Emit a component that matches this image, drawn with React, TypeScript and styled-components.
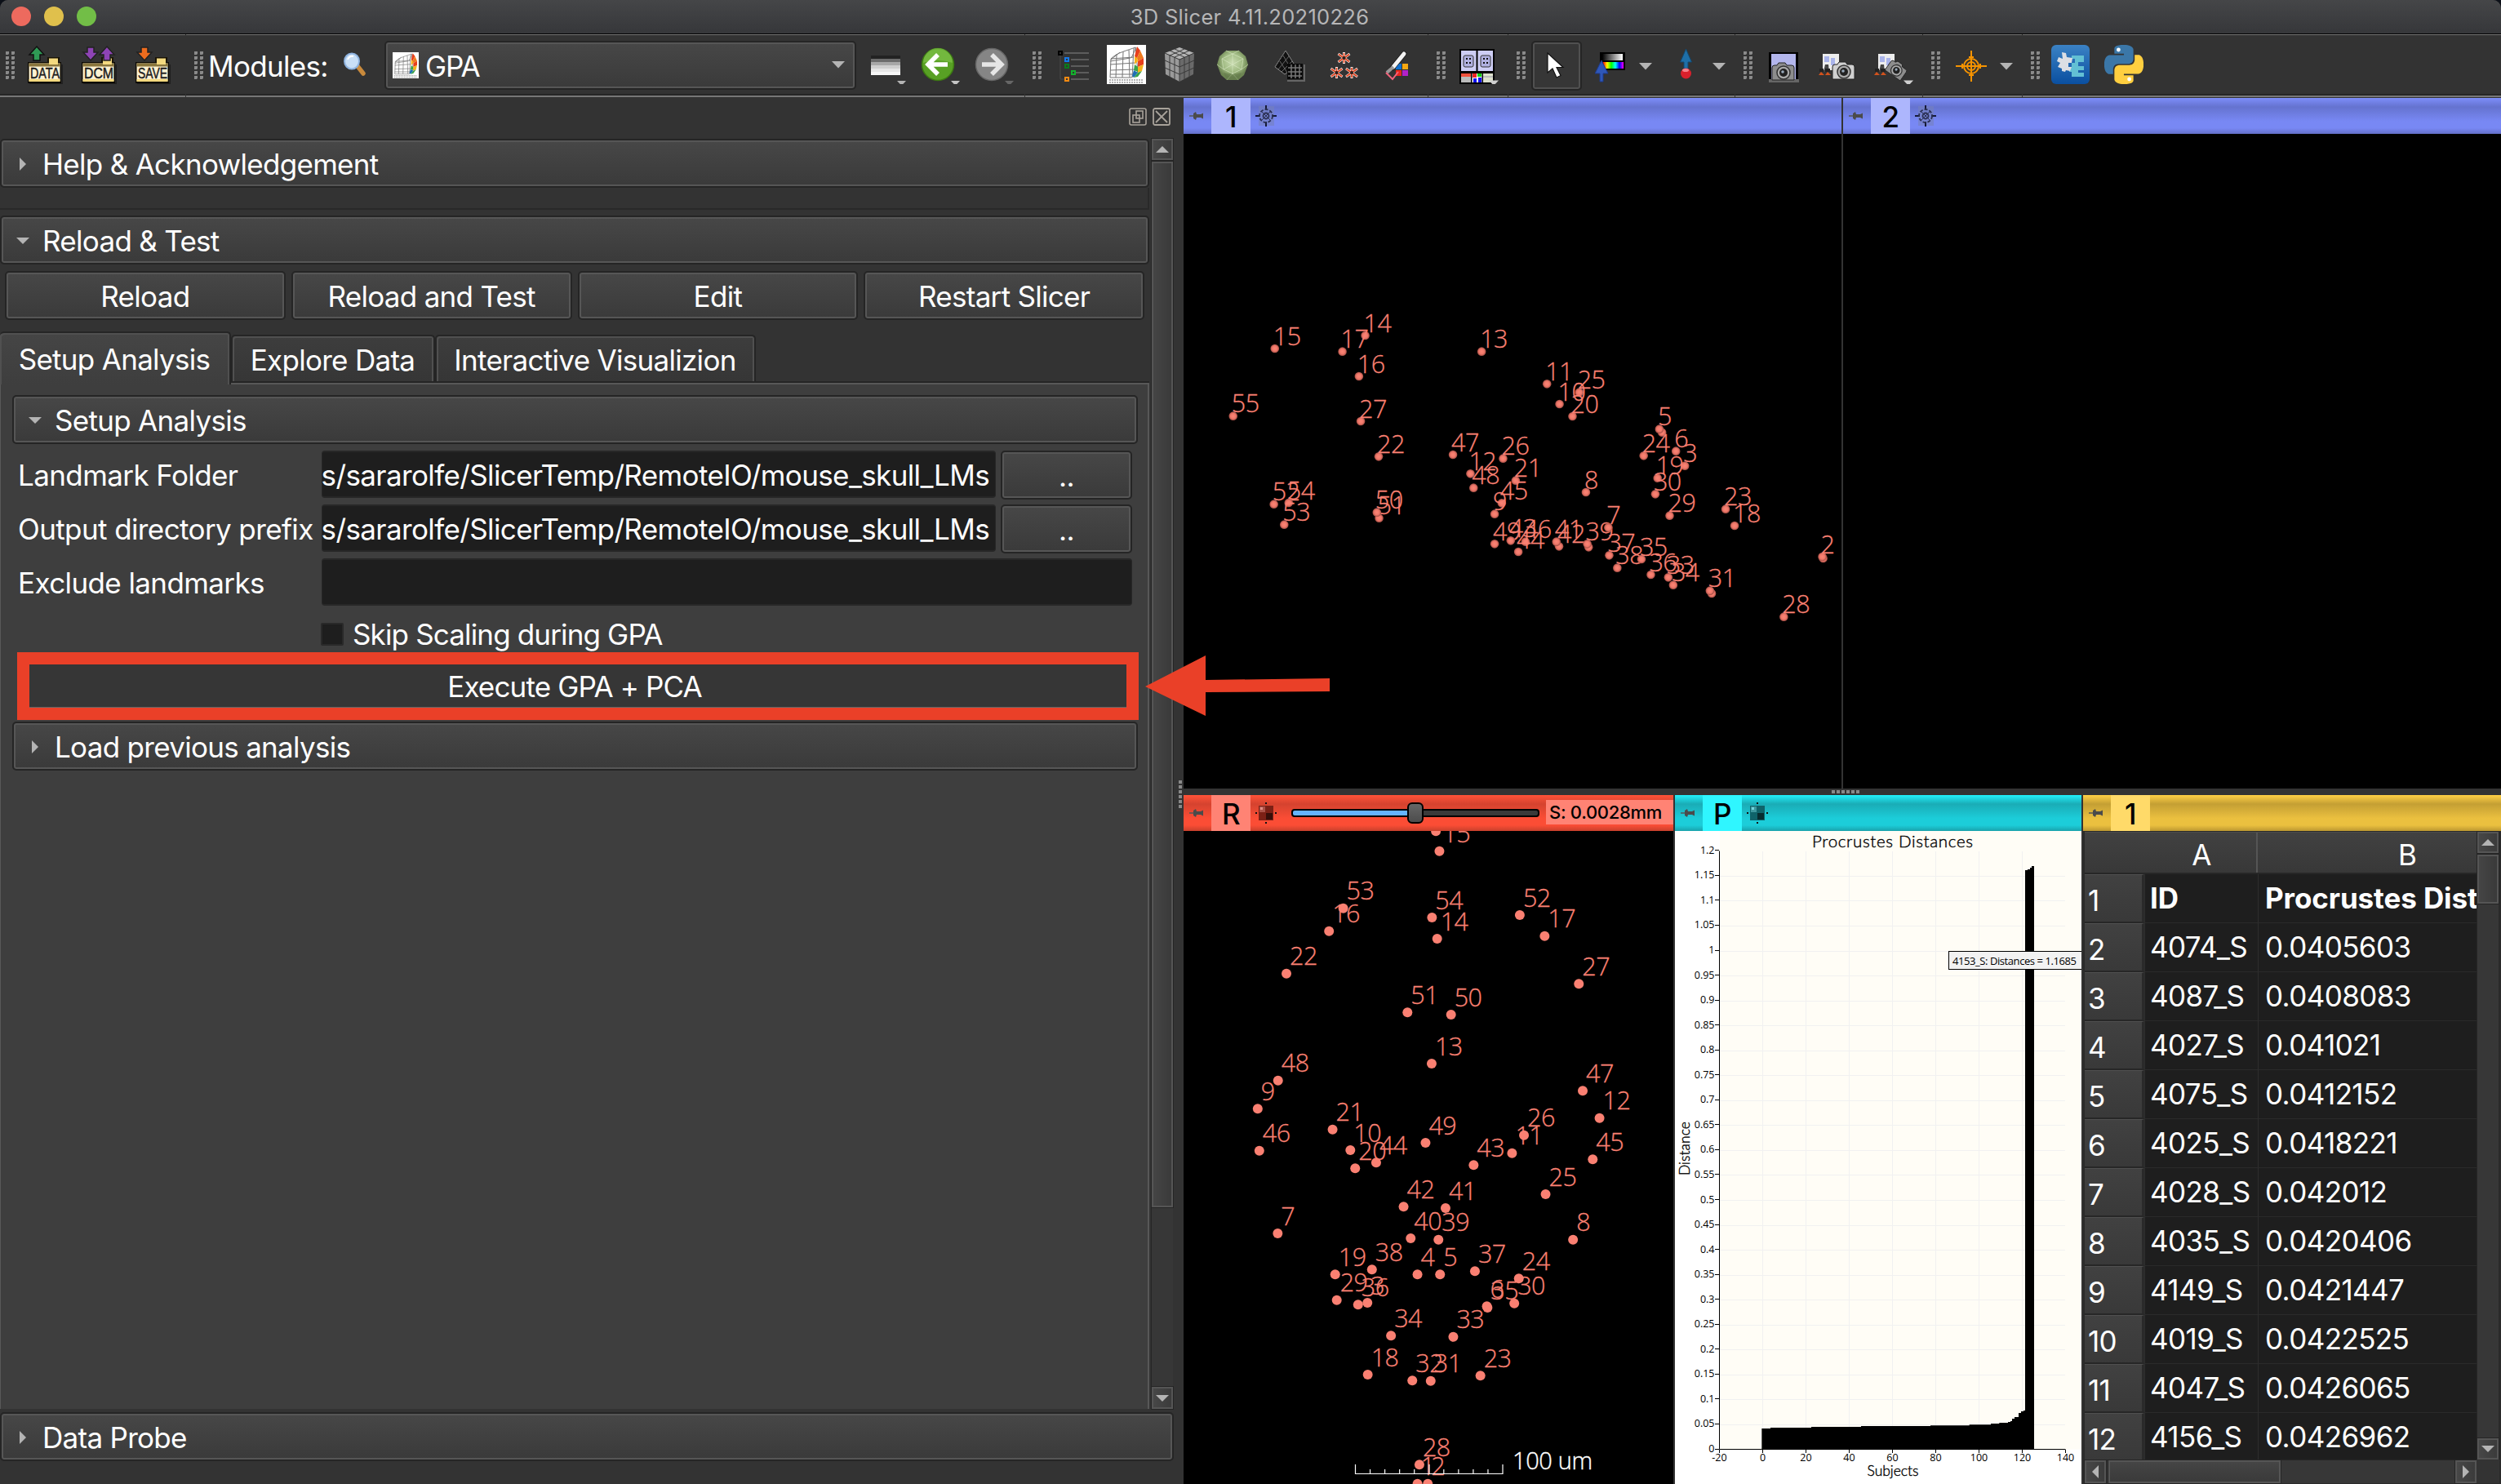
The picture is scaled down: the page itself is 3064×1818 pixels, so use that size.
import React from "react";
import styled, { createGlobalStyle, css } from "styled-components";

const Global = createGlobalStyle`
  * { box-sizing: border-box; }
  html, body { margin: 0; padding: 0; background: #0c1018; }
  body { font-family: Inter, "Liberation Sans", sans-serif; color: #fff; }
  svg { display: block; flex: none; }
`;

/* ---------- shared surfaces ---------- */

const bevel = css`
  background: linear-gradient(#474747, #3a3a3a);
  border: 2px solid #252525;
  border-radius: 5px;
  box-shadow: inset 0 0 0 2px #565656;
`;

const Window = styled.div`
  width: 3064px;
  height: 1818px;
  display: flex;
  flex-direction: column;
  overflow: hidden;
  background: #333;
  border-radius: 10px 10px 0 0;
  font-size: 35px;
  letter-spacing: -0.7px;
  line-height: 1;
  white-space: nowrap;
`;

const TitleBar = styled.div`
  position: relative;
  height: 42px;
  flex: none;
  display: flex;
  align-items: center;
  justify-content: center;
  background: linear-gradient(#454648, #36373a);
  border-bottom: 1px solid #000;
  color: #b6b6b7;
  font-size: 25.5px;
  letter-spacing: 0.3px;
  padding-right: 2px;
`;

const Lights = styled.div`
  position: absolute;
  left: 14px;
  top: 8px;
  display: flex;
  gap: 16px;
`;

const Light = styled.i<{ c: string }>`
  width: 24px;
  height: 24px;
  border-radius: 50%;
  background: ${(p) => p.c};
`;

/* ---------- toolbar ---------- */

const Toolbar = styled.div`
  height: 78px;
  flex: none;
  display: flex;
  gap: 1px;
`;

const Group = styled.div<{ w?: number }>`
  ${(p) => (p.w ? `width:${p.w - 1}px; flex:none;` : "flex:1;")}
  display: flex;
  align-items: center;
  border-top: 1px solid #777;
  border-bottom: 2px solid #777;
  box-shadow: inset 0 -2px 0 #262626;
  background: #333;
  padding-bottom: 2px;
  margin-bottom: 1px;
`;

const Handle = styled.i<{ ml: number }>`
  width: 12px;
  height: 34px;
  flex: none;
  margin: 2px 0 0 ${(p) => p.ml}px;
  background-image: linear-gradient(135deg, #8a8a8a 50%, #555 50%);
  background-size: 7px 6px;
  mask: repeating-linear-gradient(#000 0 4px, transparent 4px 6px), repeating-linear-gradient(90deg, #000 0 4px, transparent 4px 7px);
  mask-composite: intersect;
`;

const Tool = styled.span<{ ml: number }>`
  margin-left: ${(p) => p.ml}px;
  flex: none;
`;

const ModulesLabel = styled.span`
  width: 144px;
  margin: 5px 0 0 5px;
  flex: none;
`;

const Combo = styled.div`
  ${bevel}
  width: 578px;
  height: 60px;
  margin: 1px 0 0 23px;
  flex: none;
  display: flex;
  align-items: center;
  padding: 0 12px 0 8px;
  gap: 8px;
`;

const ComboText = styled.span`
  flex: 1;
  padding-top: 3px;
  letter-spacing: -1.2px;
`;

const Pressed = styled.span`
  width: 62px;
  height: 61px;
  flex: none;
  margin: 2px 0 0 6px;
  display: flex;
  align-items: center;
  justify-content: center;
  padding-left: 2px;
  border: 2px solid #252525;
  border-radius: 5px;
  box-shadow: inset 0 0 0 2px #505050;
  background: #363636;
`;

const Icon = ({ w, children, ml = 0 }: { w: number; ml?: number; children: React.ReactNode }) => (
  <Tool ml={ml}>
    <svg width={w} height={48} viewBox={`0 0 ${w} 48`}>
      {children}
    </svg>
  </Tool>
);

const Drop = ({ ml }: { ml: number }) => (
  <Icon w={16} ml={ml}>
    <path d="M0 22h16l-8 8.500z" fill="#b4b4b4" />
  </Icon>
);

const Folder = ({ label, ml, children }: { label: string; ml: number; children: React.ReactNode }) => (
  <Icon w={43} ml={ml}>
    <path d="M2 48h41V24" stroke="#1f1f1f" strokeWidth="3" fill="none" />
    <rect x="24" y="15" width="15" height="8" fill="#1a1508" />
    <rect x="26" y="16.500" width="11" height="7" fill="#f3d97f" />
    <rect x="0" y="21" width="41" height="26" fill="#0d0a04" />
    <rect x="1.500" y="22.500" width="38" height="22" fill="#fdf2d2" />
    <rect x="1.500" y="22.500" width="38" height="4" fill="#8a763c" />
    <rect x="26" y="18" width="11" height="6" fill="#f3d97f" />
    <rect x="1.500" y="42" width="38" height="3" fill="#f3d97f" />
    <text x="3" y="40.500" fontFamily="Liberation Sans, sans-serif" fontSize="18.500" letterSpacing="0" textLength="36" lengthAdjust="spacingAndGlyphs" fill="#1b1b1b" stroke="#1b1b1b" strokeWidth=".5">
      {label}
    </text>
    {children}
  </Icon>
);

const upArrow = "M11 2l9 10h-5v7h-8v-7h-5z";
const downArrow = "M11 19l9-10h-5v-6h-8v6h-5z";

const MeshFace = ({ s }: { s: number }) => (
  <g transform={`scale(${s})`}>
    <rect width="48" height="48" fill="#fff" />
    <path d="M5 17c8-8 20-10 30-14l3 30-8 7H4z M5 17l28-2M4 24l30-2M4 31l31-1M4 36h30M12 11l-1 29M20 8l-1 32M27 6l1 34M33 4l-2 36M16 9l-11 9M36 3l-6 13M4 20l25-4" fill="none" stroke="#777" strokeWidth="1" />
    <path d="M37 2l4 5-4 9-3-2z" fill="#e8401c" />
    <path d="M41 7l4 9-7 4-1-4z" fill="#f07a1e" />
    <path d="M37 16l-3-2v10l4-4z" fill="#f6b21b" />
    <path d="M45 16v8l-7 3v-7z" fill="#e8401c" />
    <path d="M34 24l4 3v6l-5-2z" fill="#37a34a" />
    <path d="M45 24l-2 8-5 2v-7z" fill="#f6b21b" />
    <path d="M33 31l5 3-5 6-2-2z" fill="#1f6fb5" />
    <path d="M43 32l-5 7-5 1 5-6z" fill="#37a34a" />
    <path d="M3 43h42M3 46h42" stroke="#999" strokeWidth="1.500" strokeDasharray="2 1" />
  </g>
);

const Star = ({ x, y }: { x: number; y: number }) => (
  <g transform={`translate(${x} ${y})`}>
    <path d="M0-7V7M-7-5L7 5M-7 5L7-5" stroke="#f4e8e4" strokeWidth="3" />
    <path d="M0-6V6M-6.500-4.500L6.500 4.500M-6.500 4.500L6.500-4.500" stroke="#e0401c" strokeWidth="1.700" />
    <circle r="2" fill="#222" />
  </g>
);

const CameraBody = ({ x, y, light }: { x: number; y: number; light?: boolean }) => (
  <g transform={`translate(${x} ${y})`}>
    <path d="M0 5q0-3 3-3h3l2-3h8l2 3h6q3 0 3 3v15H0z" fill={light ? "#d0d0d0" : "#8d8d8d"} stroke="#222" strokeWidth="1" />
    <circle cx="14" cy="11" r="8" fill="#aaa" stroke="#333" strokeWidth="1.500" />
    <circle cx="14" cy="11" r="5" fill="#222" />
    <circle cx="13" cy="10" r="1.800" fill="#9ab" />
  </g>
);

const SceneShot = () => (
  <>
    <rect x="6" y="11" width="20" height="20" fill="#ededed" />
    <path d="M8 14h6v7H8zM16 16h5v9h-5z" fill="#aab4ea" />
    <path d="M9 24l4 0 1 9H7z" fill="#444" />
    <path d="M1 37l3-4 4 4zM9 37l3-4 4 4z" fill="#d4521c" />
    <path d="M2 31h5M9 31h6" stroke="#222" strokeWidth="4" />
  </>
);

const pyTop =
  "M14.25.18l.9.2.73.26.59.3.45.32.34.34.25.34.16.33.1.3.04.26.02.2-.01.13V8.500l-.05.63-.13.55-.21.46-.26.38-.3.31-.33.25-.35.19-.35.14-.33.1-.3.07-.26.04-.21.02H8.770l-.69.05-.59.14-.5.22-.41.27-.33.32-.27.35-.2.36-.15.37-.1.35-.07.32-.04.27-.02.21v3.060H3.170l-.21-.03-.28-.07-.32-.12-.35-.18-.36-.26-.36-.36-.35-.46-.32-.59-.28-.73-.21-.88-.14-1.050-.05-1.230.06-1.220.16-1.040.24-.87.32-.71.36-.57.4-.44.42-.33.42-.24.4-.16.36-.1.32-.05.24-.01h.16l.06.01h8.160v-.83H6.180l-.01-2.750-.02-.37.05-.34.11-.31.17-.28.25-.26.31-.23.38-.2.44-.18.51-.15.58-.12.64-.1.71-.06.77-.04.84-.02 1.270.05z";

const MainToolbar = () => (
  <Toolbar>
    <Group w={228}>
      <Handle ml={7} />
      <Folder label="DATA" ml={15}>
        <path d={upArrow} fill="#2f9a55" stroke="#111" strokeWidth="1.500" />
      </Folder>
      <Folder label="DCM" ml={23}>
        <path d={downArrow} fill="#8e44b5" stroke="#222" strokeWidth="1.500" />
        <path d={upArrow} transform="translate(20 0)" fill="#8e44b5" stroke="#222" strokeWidth="1.500" />
      </Folder>
      <Folder label="SAVE" ml={23}>
        <path d={downArrow} fill="#ee6c1e" stroke="#222" strokeWidth="1.500" />
      </Folder>
    </Group>
    <Group w={1028}>
      <Handle ml={10} />
      <ModulesLabel>Modules:</ModulesLabel>
      <Icon w={28} ml={21}>
        <path d="M18 26l7 9" stroke="#c98a3c" strokeWidth="5.500" strokeLinecap="round" />
        <ellipse cx="11" cy="20" rx="9" ry="9.500" fill="#c9dff6" stroke="#8fb4e0" strokeWidth="2" />
        <path d="M6 18q2-5 7-4" stroke="#fff" strokeWidth="2" fill="none" />
      </Icon>
      <Combo>
        <svg width="32" height="32">
          <MeshFace s={0.667} />
        </svg>
        <ComboText>GPA</ComboText>
        <svg width="16" height="9">
          <path d="M0 0h16l-8 8.500z" fill="#b4b4b4" />
        </svg>
      </Combo>
      <Icon w={44} ml={17}>
        {["#222", "#6c6c6c", "#a8a8a8", "#cfcfcf", "#e6e6e6", "#f6f6f6"].map((c, i) => (
          <rect key={c} x="1" y={13 + i * 4} width="36" height="4" fill={c} />
        ))}
        <path d="M33 44h11l-5.500 6z" fill="#b4b4b4" />
      </Icon>
      <Icon w={48} ml={18}>
        <circle cx="21" cy="24" r="19.500" fill="#58a024" stroke="#3c7a12" strokeWidth="1.500" />
        <path d="M3 22a18 18 0 0136 0q-18-6-36 0z" fill="#86c850" opacity=".6" />
        <path d="M21 12L9 24l12 12M10 24h23" stroke="#fff" strokeWidth="5.500" fill="none" />
        <path d="M37 44h11l-5.500 6z" fill="#c4c4c4" />
      </Icon>
      <Icon w={48} ml={18}>
        <circle cx="21" cy="24" r="19.500" fill="#858585" stroke="#666" strokeWidth="1.500" />
        <path d="M21 12l12 12-12 12M32 24H9" stroke="#e6e6e6" strokeWidth="5.500" fill="none" />
        <path d="M37 44h11l-5.500 6z" fill="#666" />
      </Icon>
    </Group>
    <Group w={494}>
      <Handle ml={9} />
      <Icon w={38} ml={19}>
        <path d="M8 10h30M16 18h22M16 26h22M22 34h16M16 42h22" stroke="#5c5c5c" strokeWidth="2" />
        <path d="M3 12v30M3 42h5" stroke="#4a4a4a" strokeWidth="1" />
        <rect x="1" y="8" width="4" height="4" fill="none" stroke="#000" strokeWidth="2" />
        <rect x="9" y="16" width="4" height="4" fill="none" stroke="#1478e8" strokeWidth="2" />
        <rect x="9" y="24" width="4" height="4" fill="none" stroke="#0b7a1c" strokeWidth="2" />
        <rect x="17" y="32" width="4" height="4" fill="none" stroke="#12b22c" strokeWidth="2" />
        <rect x="9" y="40" width="4" height="4" fill="none" stroke="#f58a12" strokeWidth="2" />
      </Icon>
      <Icon w={48} ml={22}>
        <MeshFace s={1} />
      </Icon>
      <Icon w={40} ml={21}>
        <path d="M20 3l18 7-18 8L2 10z" fill="#b4b4b4" />
        <path d="M2 10l18 8v27L3 36z" fill="#9a9a9a" />
        <path d="M38 10l-18 8v27l17-9z" fill="#6a6a6a" />
        <path d="M8 7l18 8v27M14 5l18 8v26M32 7l-18 8v27M26 5L8 13v26M2 19l18 8 18-8M2 28l18 8 18-8M20 18v27M2 10l18 8 18-8" stroke="#3a3a3a" strokeWidth="1" fill="none" />
      </Icon>
      <Icon w={40} ml={25}>
        <defs>
          <radialGradient id="model" cx=".5" cy=".4">
            <stop offset="0" stopColor="#c9dbb0" />
            <stop offset=".6" stopColor="#a3bd86" />
            <stop offset="1" stopColor="#6d8552" />
          </radialGradient>
        </defs>
        <path d="M12 7h16l8 7 3 10-5 13-7 6H13l-7-6-5-13 3-10z" fill="url(#model)" />
        <path d="M7 17l13-6 13 6-2 13-11 5-11-5zM20 11v24M7 17l24 13M33 17L9 30M1 24l8 6M39 24l-8 6M12 7l8 4 8-4M20 35l-7 8M20 35l7 8" stroke="#dfeccb" strokeWidth="1" opacity=".55" fill="none" />
        <path d="M9 34l11 2 11-2-4 9H13z" fill="#5f7747" opacity=".5" />
      </Icon>
      <Icon w={38} ml={31}>
        <path d="M14 7l12 19-13 10L1 27z" fill="#111" stroke="#8c8c8c" strokeWidth="1" />
        <path d="M11 13l10 17M7 20l9 14M18 14L5 30M22 20L9 33M14 7L1 27" stroke="#666" strokeWidth="1" />
        <rect x="16" y="23" width="19" height="19" fill="#0a0a0a" />
        <path d="M16 44h21V24" stroke="#666" strokeWidth="2" fill="none" />
        <path d="M21 24v17M26 24v17M31 24v17M17 28h17M17 33h17M17 38h17" stroke="#777" strokeWidth="1.500" />
      </Icon>
      <Icon w={38} ml={28}>
        <Star x={19.500} y={16} />
        <Star x={10.500} y={34} />
        <Star x={29} y={34} />
      </Icon>
      <Icon w={30} ml={31}>
        <rect x="14" y="23" width="7" height="7" fill="#0f6fd0" />
        <rect x="22" y="23" width="7" height="7" fill="#f3a712" />
        <rect x="14" y="31" width="7" height="7" fill="#e8251c" />
        <rect x="22" y="31" width="7" height="7" fill="#b321c9" />
        <path d="M24 11L10 28" stroke="#1c1c1c" strokeWidth="6.500" strokeLinecap="round" />
        <path d="M24 11L11 27" stroke="#f4f4f4" strokeWidth="5" strokeLinecap="round" />
        <path d="M11 27l-8 7" stroke="#999" strokeWidth="4" />
        <path d="M2 34l8 8 7-9" stroke="#f0647c" strokeWidth="2" fill="none" />
      </Icon>
    </Group>
    <Group w={98}>
      <Handle ml={10} />
      <Icon w={48} ml={16}>
        <rect y="5" width="43" height="43" fill="#000" />
        <rect x="2" y="7" width="18.500" height="25" fill="#cdcdf4" />
        <rect x="22.500" y="7" width="18.500" height="25" fill="#cdcdf4" />
        <rect x="5" y="13" width="12" height="14" rx="2" fill="#b0b0e0" stroke="#333" />
        <rect x="26" y="13" width="12" height="14" rx="2" fill="#b0b0e0" stroke="#333" />
        <path d="M8 17h2M12 17h2M8 22h2M12 22h2M29 17h2M33 17h2M29 22h2M33 22h2" stroke="#111" strokeWidth="2" />
        <rect x="2" y="35" width="12" height="11" fill="#bbb" />
        <rect x="2" y="35" width="12" height="4" fill="#f0503c" />
        <rect x="15.500" y="35" width="12" height="11" fill="#fff" />
        <path d="M16 35h5v5h-5z" fill="#e22" />
        <path d="M22 35h5v4h-5z" fill="#1c1" />
        <path d="M17 41h4v5h-4zM23 40h4v6h-4z" fill="#11e" />
        <rect x="29" y="35" width="12" height="11" fill="#dde0cc" />
        <path d="M29 39h12" stroke="#bbb" strokeWidth="2" />
        <path d="M36 43.500h12l-6 6.500z" fill="#d0d0d0" />
      </Icon>
    </Group>
    <Group w={278}>
      <Handle ml={10} />
      <Pressed>
        <svg width="28" height="32" viewBox="0 0 28 32">
          <path d="M2 1v24l6-5 5 11 5-2.500-5-10h8z" fill="#fff" stroke="#111" strokeWidth="1.200" />
        </svg>
      </Pressed>
      <Icon w={38} ml={16}>
        <defs>
          <linearGradient id="gray">
            <stop offset="0" stopColor="#000" />
            <stop offset="1" stopColor="#fff" />
          </linearGradient>
          <linearGradient id="hue">
            <stop offset="0" stopColor="#f00" />
            <stop offset=".2" stopColor="#ff0" />
            <stop offset=".4" stopColor="#0f0" />
            <stop offset=".6" stopColor="#0ff" />
            <stop offset=".8" stopColor="#00f" />
            <stop offset="1" stopColor="#f0f" />
          </linearGradient>
        </defs>
        <rect x="6" y="9" width="31" height="22" fill="#000" />
        <rect x="9" y="11" width="25" height="8" fill="url(#gray)" />
        <rect x="10" y="21" width="25" height="8" fill="url(#hue)" />
        <path d="M8 19l8 16h-6v10H6V35H0z" fill="#2f57b8" stroke="#1c3a8c" strokeWidth="1" />
      </Icon>
      <Drop ml={16} />
      <Icon w={18} ml={32}>
        <path d="M9.500 5l7 16H12v9H7v-9H2.500z" fill="#1e6fa8" stroke="#12486e" strokeWidth="1" />
        <circle cx="9.500" cy="35" r="6.500" fill="#d9202c" />
        <ellipse cx="9" cy="31" rx="4" ry="2" fill="#f5808a" />
      </Icon>
      <Drop ml={24} />
    </Group>
    <Group w={230}>
      <Handle ml={10} />
      <Icon w={38} ml={19}>
        <rect x="0" y="9" width="36" height="36" fill="#000" />
        <rect x="3" y="11" width="30" height="32" fill="#b3b6ec" />
        <rect x="0" y="42" width="37" height="4" fill="#666" />
        <g transform="translate(3 21)">
          <CameraBody x={1} y={2} />
        </g>
      </Icon>
      <Icon w={46} ml={22}>
        <SceneShot />
        <CameraBody x={18} y={22} light />
      </Icon>
      <Icon w={50} ml={22}>
        <SceneShot />
        <g transform="translate(21 21) rotate(35) scale(.85)">
          <CameraBody x={0} y={-6} />
        </g>
        <path d="M37 43.500h12l-6 6.500z" fill="#d0d0d0" />
      </Icon>
    </Group>
    <Group w={122}>
      <Handle ml={10} />
      <Icon w={38} ml={18}>
        <g fill="none" stroke="#f59300" strokeWidth="2">
          <path d="M19 7v38M0 26h38" />
          <circle cx="19" cy="26" r="9" />
          <circle cx="19" cy="26" r="5" />
          <path d="M16 15h6M16 37h6M8 23v6M30 23v6" />
        </g>
      </Icon>
      <Drop ml={16} />
    </Group>
    <Group>
      <Handle ml={10} />
      <Icon w={47} ml={13}>
        <defs>
          <linearGradient id="ext" x2="0" y2="1">
            <stop offset="0" stopColor="#3b82c4" />
            <stop offset="1" stopColor="#0a4fa0" />
          </linearGradient>
        </defs>
        <rect width="47" height="48" rx="6" fill="url(#ext)" />
        <path d="M25 13h15v8h-7v5h7v5h-7v3h7v5H25v-6h-3v-6h3v-5h4v-5h-4z" fill="#62c0d4" />
        <path d="M13 9l5 1 1 5 7 1-1 6h-4v5h4l-2 5-5-1-1 2-4-1v-3l-5-2 3-5-4-2 2-5 5 2z" fill="#dcdfe4" />
      </Icon>
      <Icon w={48} ml={18}>
        <g transform="scale(2)">
          <path d={pyTop} fill="#3b77a8" />
          <path d={pyTop} transform="rotate(180 12 12)" fill="#ffcf40" />
          <circle cx="8.700" cy="3" r="1.200" fill="#fff" />
          <circle cx="15.300" cy="21" r="1.200" fill="#fff" />
        </g>
      </Icon>
    </Group>
  </Toolbar>
);

/* ---------- module panel ---------- */

const Body = styled.div`
  flex: 1;
  min-height: 0;
  display: flex;
`;

const Dock = styled.div`
  position: relative;
  width: 1450px;
  flex: none;
  display: flex;
  flex-direction: column;
  background: #333;
`;

const DockTitle = styled.div`
  height: 50px;
  flex: none;
  display: flex;
  justify-content: flex-end;
  gap: 7px;
  padding: 12px 16px 0 0;
`;

const ScrollArea = styled.div`
  height: 1556px;
  flex: none;
  display: flex;
  width: 1437px;
  justify-content: space-between;
`;

const Module = styled.div`
  width: 1408px;
  display: flex;
  flex-direction: column;
`;

const Collapsible = styled.div<{ open?: boolean }>`
  ${bevel}
  height: 60px;
  flex: none;
  display: flex;
  align-items: center;
  padding: 2px 0 0 ${(p) => (p.open ? 18 : 22)}px;
  gap: ${(p) => (p.open ? 16 : 20)}px;
`;

const EmptyFrame = styled.div`
  height: 27px;
  flex: none;
  border: 2px solid #292929;
  border-left: 0;
  border-top: 0;
  margin-bottom: 7px;
`;

const ButtonRow = styled.div`
  display: grid;
  grid-template-columns: repeat(4, 1fr);
  gap: 7px;
  padding: 8px 6px 0 6px;
`;

const Button = styled.div`
  ${bevel}
  height: 60px;
  display: flex;
  align-items: center;
  justify-content: center;
  padding-top: 3px;
`;

const Tabs = styled.div`
  display: flex;
  align-items: flex-end;
  height: 63px;
  margin-top: 14px;
  padding-bottom: 2px;
  box-shadow: inset 0 -2px 0 #252525;
`;

const Tab = styled.div<{ w: number; active?: boolean }>`
  width: ${(p) => p.w}px;
  height: ${(p) => (p.active ? 65 : 57)}px;
  margin-bottom: ${(p) => (p.active ? -4 : 0)}px;
  z-index: ${(p) => (p.active ? 1 : 0)};
  position: relative;
  border: 2px solid #252525;
  border-bottom: 0;
  border-left-width: ${(p) => (p.active ? 0 : 2)}px;
  border-radius: 5px 5px 0 0;
  box-shadow: inset 2px 2px 0 #505050, inset -2px 0 0 #505050;
  background: ${(p) => (p.active ? "linear-gradient(#454545,#3e3e3e)" : "linear-gradient(#3d3d3d,#363636)")};
  display: flex;
  align-items: center;
  justify-content: center;
  padding: ${(p) => (p.active ? "1px 1px 0 0" : "4px 1px 0 0")};
`;

const Pane = styled.div`
  flex: 1;
  background: #3e3e3e;
  border: 2px solid #585858;
  border-left-width: 1px;
  border-bottom: 0;
  padding: 13px 12px 0 14px;
  display: flex;
  flex-direction: column;
`;

const Form = styled.div`
  display: grid;
  grid-template-columns: 371px minmax(0, 1fr);
  row-gap: 6px;
  padding: 8px 7px 0 7px;
`;

const Label = styled.div`
  height: 60px;
  display: flex;
  align-items: center;
  letter-spacing: -0.6px;
`;

const Field = styled.div`
  display: flex;
  gap: 6px;
  padding-left: 1px;
`;

const Input = styled.div`
  flex: 1;
  min-width: 0;
  height: 58px;
  background: #1e1e1e;
  border: 2px solid #272727;
  border-left-width: 1px;
  border-right-width: 1px;
  border-radius: 4px;
  overflow: hidden;
  display: flex;
  align-items: center;
  justify-content: flex-end;
  padding: 2px 7px 0 0;
  letter-spacing: -0.62px;
`;

const BrowseButton = styled(Button)`
  width: 161px;
`;

const CheckRow = styled.div`
  display: flex;
  align-items: center;
  gap: 11px;
  height: 40px;
  margin: 13px 0 -1px 378px;
  letter-spacing: -0.85px;
`;

const Check = styled.i`
  width: 28px;
  height: 28px;
  background: #1e1e1e;
  border: 2px solid #292929;
  border-radius: 2px;
`;

const Execute = styled.div`
  height: 83px;
  width: 1374px;
  margin: 3px 0 2px 6px;
  border: 15px solid #ea4028;
  background: #363636;
  box-shadow: inset 0 -1px 0 #666;
  display: flex;
  align-items: center;
  justify-content: center;
  padding: 2px 8px 0 0;
  letter-spacing: -0.85px;
`;

const ScrollBarV = styled.div`
  width: 27px;
  display: flex;
  flex-direction: column;
  background: #373737;
  border-left: 1px solid #262626;
`;

const ScrollButton = styled.div<{ w?: number; h?: number }>`
  width: ${(p) => (p.w ? `${p.w}px` : "100%")};
  height: ${(p) => (p.h ? `${p.h}px` : "100%")};
  flex: none;
  border: 2px solid #555;
  outline: 1px solid #252525;
  background: linear-gradient(90deg, #474747, #3b3b3b);
  display: flex;
  align-items: center;
  justify-content: center;
`;

const Thumb = styled.div<{ w?: number; h?: number }>`
  width: ${(p) => (p.w ? `${p.w}px` : "auto")};
  height: ${(p) => (p.h ? `${p.h}px` : "auto")};
  margin: ${(p) => (p.h ? "2px 0 0" : "0 0 0 3px")};
  flex: none;
  border: 2px solid #555;
  outline: 1px solid #252525;
  background: ${(p) => (p.h ? "linear-gradient(90deg,#454545,#3a3a3a)" : "linear-gradient(#454545,#3a3a3a)")};
`;

const Spacer = styled.div`
  flex: 1;
`;

const Probe = styled.div`
  width: 1438px;
  margin-top: 4px;
`;

const PointerArrow = styled.svg`
  position: absolute;
  left: 1403px;
  top: 683px;
  z-index: 5;
`;

const SplitGrip = styled.i<{ v?: boolean }>`
  position: absolute;
  ${(p) => (p.v ? "left:1444px; top:836px; width:4px; height:34px;" : "left:794px; top:2px; width:34px; height:4px;")}
  background: repeating-linear-gradient(${(p) => (p.v ? "180deg" : "90deg")}, #888 0 4px, transparent 4px 6px);
`;

const Right = () => (
  <svg width="8" height="16">
    <path d="M0 0l8 8-8 8z" fill="#b4b4b4" />
  </svg>
);
const Down = () => (
  <svg width="16" height="8">
    <path d="M0 0h16l-8 8z" fill="#b4b4b4" />
  </svg>
);
const Up = () => (
  <svg width="16" height="8">
    <path d="M0 8h16l-8-8z" fill="#b4b4b4" />
  </svg>
);
const Left = () => (
  <svg width="8" height="16">
    <path d="M8 0v16l-8-8z" fill="#b4b4b4" />
  </svg>
);

const folderPath = "/Users/sararolfe/SlicerTemp/RemoteIO/mouse_skull_LMs";

const ModulePanel = () => (
  <Dock>
    <DockTitle>
      <svg width="22" height="22" fill="none" stroke="#a8a29a" strokeWidth="1.600">
        <rect x="1" y="1" width="20" height="20" rx="2" />
        <rect x="9" y="4" width="8" height="9" />
        <rect x="5" y="9" width="8" height="9" />
      </svg>
      <svg width="22" height="22" fill="none" stroke="#a8a29a" strokeWidth="1.800">
        <rect x="1" y="1" width="20" height="20" rx="2" />
        <path d="M4 4l14 14M18 4L4 18" />
      </svg>
    </DockTitle>
    <ScrollArea>
      <Module>
        <Collapsible>
          <Right />
          Help &amp; Acknowledgement
        </Collapsible>
        <EmptyFrame />
        <Collapsible open>
          <Down />
          Reload &amp; Test
        </Collapsible>
        <ButtonRow>
          <Button>Reload</Button>
          <Button>Reload and Test</Button>
          <Button>Edit</Button>
          <Button>Restart Slicer</Button>
        </ButtonRow>
        <Tabs>
          <Tab w={283} active>
            Setup Analysis
          </Tab>
          <Tab w={250}>Explore Data</Tab>
          <Tab w={393}>Interactive Visualizion</Tab>
        </Tabs>
        <Pane>
          <Collapsible open>
            <Down />
            Setup Analysis
          </Collapsible>
          <Form>
            <Label>Landmark Folder</Label>
            <Field>
              <Input>{folderPath}</Input>
              <BrowseButton>..</BrowseButton>
            </Field>
            <Label>Output directory prefix</Label>
            <Field>
              <Input>{folderPath}</Input>
              <BrowseButton>..</BrowseButton>
            </Field>
            <Label>Exclude landmarks</Label>
            <Field>
              <Input />
            </Field>
          </Form>
          <CheckRow>
            <Check />
            Skip Scaling during GPA
          </CheckRow>
          <Execute>Execute GPA + PCA</Execute>
          <Collapsible>
            <Right />
            Load previous analysis
          </Collapsible>
        </Pane>
      </Module>
      <ScrollBarV>
        <ScrollButton h={26}>
          <Up />
        </ScrollButton>
        <Thumb h={1281} />
        <Spacer />
        <ScrollButton h={27}>
          <Down />
        </ScrollButton>
      </ScrollBarV>
    </ScrollArea>
    <Probe>
      <Collapsible>
        <Right />
        Data Probe
      </Collapsible>
    </Probe>
    <SplitGrip v />
    <PointerArrow width="226" height="75">
      <path d="M0 38L74 0v30L226 28v16L74 45v29z" fill="#ea4028" />
    </PointerArrow>
  </Dock>
);

/* ---------- views ---------- */

const Views = styled.div`
  flex: 1;
  display: flex;
  flex-direction: column;
`;

const TopViews = styled.div`
  height: 846px;
  flex: none;
  display: grid;
  grid-template-columns: 806px 806px;
  gap: 2px;
`;

const Splitter = styled.div`
  position: relative;
  height: 8px;
  flex: none;
`;

const BottomViews = styled.div`
  flex: 1;
  display: grid;
  grid-template-columns: 600px 498px 512px;
  gap: 2px;
  min-height: 0;
`;

const View = styled.div`
  background: #000;
  display: flex;
  flex-direction: column;
  overflow: hidden;
  min-width: 0;
`;

const tones = {
  blue: ["#7d8dfa", "#6573cf", "#7888f4", "#6470c8", "#adb6fd"],
  red: ["#ff5238", "#d5432f", "#fb4d35", "#c8402c", "#ff8374"],
  cyan: ["#22f0fa", "#1aacb6", "#1ccdd9", "#19a3ac", "#2ff6ff"],
  gold: ["#ffd045", "#c49f34", "#ebc03f", "#bd9831", "#ffda69"],
};
type Tone = keyof typeof tones;

const ViewBar = styled.div<{ tone: Tone }>`
  height: 44px;
  flex: none;
  display: flex;
  align-items: center;
  padding-left: 7px;
  background: ${({ tone }) => {
    const t = tones[tone];
    return `linear-gradient(${t[0]} 0, ${t[1]} 25%, ${t[2]} 65%, ${t[2]} 84%, ${t[3]} 100%)`;
  }};
`;

const ViewName = styled.span<{ tone: Tone }>`
  width: 48px;
  height: 44px;
  margin: 0 6px 0 9px;
  display: flex;
  align-items: center;
  justify-content: center;
  padding-top: 2px;
  color: #000;
  font-weight: 500;
  background: ${(p) => tones[p.tone][4]};
`;

const SliderTrack = styled.div`
  width: 304px;
  height: 10px;
  margin: 0 8px 0 18px;
  display: flex;
  align-items: center;
  border: 2px solid #000;
  border-radius: 4px;
  background: linear-gradient(90deg, #66b4ff 50%, #3a3a3a 50%);
`;

const Knob = styled.i`
  width: 20px;
  height: 26px;
  margin-left: 140px;
  border: 2px solid #000;
  border-radius: 6px;
  background: linear-gradient(#666, #4c4c4c);
`;

const Offset = styled.div`
  flex: 1;
  height: 30px;
  margin-top: -2px;
  display: flex;
  align-items: center;
  padding-left: 4px;
  font-size: 22px;
  font-weight: 500;
  color: #000;
  background: #ff8374;
  letter-spacing: -0.3px;
`;

const Pin = () => (
  <svg width="18" height="12" viewBox="0 0 18 12">
    <path d="M0 6h7" stroke="#555" strokeWidth="1.500" />
    <path d="M5 3l3-2 1 3h5l3-1.500v7L14 8H9l-1 3-3-2z" fill="#4b4b4b" />
  </svg>
);

const Orbit = () => (
  <svg width="26" height="26" viewBox="0 0 26 26" fill="none" stroke="#2a2f52" strokeWidth="1.800">
    <rect x="4" y="1" width="19" height="24" fill="#7580bd" stroke="none" opacity=".6" />
    <path d="M13 0v6M13 20v6M0 13h6M20 13h6" stroke="#151a3a" strokeWidth="2" />
    <circle cx="13" cy="13" r="8" strokeDasharray="4 2" />
    <circle cx="13" cy="13" r="3.500" />
    <path d="M8 8l10 10M18 8L8 18" strokeWidth="1" />
  </svg>
);

const Slice = ({ dark, light }: { dark: string; light: string }) => (
  <svg width="26" height="26" viewBox="0 0 26 26">
    <rect x="4" y="4" width="18" height="18" fill={dark} />
    <rect x="5" y="5" width="7" height="7" fill={light} opacity=".4" />
    <rect x="6" y="6" width="3" height="3" fill={light} opacity=".8" />
    <rect x="13" y="13" width="8" height="8" fill="#000" opacity=".55" />
    <path d="M13 0v2M13 24v2M0 13h2M24 13h2" stroke="#111" strokeWidth="2" />
  </svg>
);

type Mark = [string, number, number];

const marks3D: Mark[] = [
  ["15", 222, 201], ["14", 424, 153], ["17", 373, 212], ["16", 410, 303], ["13", 684, 212], ["11", 830, 331],
  ["25", 902, 362], ["10", 858, 405], ["20", 887, 450], ["55", 129, 449], ["27", 414, 468], ["22", 454, 598],
  ["47", 620, 591], ["26", 732, 605], ["12", 659, 661], ["48", 666, 713], ["21", 760, 686], ["45", 729, 769],
  ["9", 713, 809], ["8", 917, 729], ["", 1087, 509], ["5", 1081, 497], ["24", 1046, 595], ["6", 1118, 578],
  ["3", 1138, 632], ["19", 1077, 677], ["30", 1072, 736], ["29", 1104, 815], ["23", 1229, 791], ["18", 1249, 852],
  ["52", 220, 773], ["54", 253, 768], ["53", 243, 848], ["51", 455, 824], ["50", 450, 803], ["49", 713, 919],
  ["43", 749, 907], ["46", 782, 911], ["44", 766, 948], ["42", 857, 928], ["41", 851, 911], ["", 923, 931],
  ["39", 920, 919], ["7", 967, 859], ["37", 969, 961], ["38", 987, 1007], ["35", 1041, 975], ["36", 1062, 1032],
  ["33", 1101, 1042], ["34", 1112, 1070], ["", 1198, 1101], ["31", 1194, 1091], ["", 1447, 972], ["2", 1445, 966],
  ["28", 1359, 1187],
];

const marksSlice: Mark[] = [
  ["", 807, 175], ["15", 818, 248], ["53", 520, 458], ["16", 476, 542], ["54", 795, 492], ["52", 1067, 483],
  ["14", 811, 570], ["17", 1144, 560], ["22", 344, 698], ["27", 1250, 736], ["51", 719, 841], ["50", 854, 849],
  ["13", 794, 1029], ["48", 318, 1091], ["9", 255, 1195], ["47", 1262, 1129], ["12", 1314, 1229], ["21", 487, 1271],
  ["46", 260, 1349], ["10", 542, 1347], ["20", 557, 1414], ["44", 622, 1393], ["49", 775, 1320], ["26", 1080, 1292],
  ["11", 1043, 1358], ["43", 924, 1402], ["45", 1293, 1381], ["25", 1147, 1509], ["42", 707, 1555], ["41", 837, 1560],
  ["40", 729, 1671], ["39", 815, 1676], ["7", 317, 1653], ["8", 1232, 1676], ["19", 495, 1804], ["38", 609, 1786],
  ["4", 750, 1804], ["5", 820, 1804], ["37", 928, 1792], ["24", 1064, 1819], ["29", 500, 1898], ["36", 566, 1915],
  ["3", 595, 1908], ["6", 965, 1921], ["35", 967, 1926], ["30", 1050, 1910], ["34", 668, 2029], ["33", 861, 2033],
  ["18", 596, 2172], ["32", 734, 2194], ["31", 791, 2195], ["23", 945, 2176], ["28", 756, 2503], ["1", 750, 2573],
  ["2", 782, 2573],
];

const LandmarkText = styled.text`
  font: 300 30.5px "Open Sans", sans-serif;
  letter-spacing: -0.5px;
  fill: #fa8072;
  stroke: #fa8072;
  stroke-width: 0.3px;
`;

const RulerText = styled.text`
  font: 300 29px "Open Sans", sans-serif;
  letter-spacing: 0;
  fill: #fff;
  stroke: #fff;
  stroke-width: 0.4px;
`;

const Landmarks = ({ marks, kx, ox, oy, r, dx, dy, fill }: { marks: Mark[]; kx: number; ox: number; oy: number; r: number; dx: number; dy: number; fill: string }) => (
  <>
    {marks.map(([name, mx, my], i) => {
      const x = mx / kx + ox;
      const y = my / 3 + oy;
      return (
        <g key={i}>
          <circle cx={x} cy={y} r={r} fill={fill} />
          {name && (
            <LandmarkText x={x + dx} y={y + dy}>
              {name}
            </LandmarkText>
          )}
        </g>
      );
    })}
  </>
);

const View3D = () => (
  <svg width="806" height="802">
    <defs>
      <radialGradient id="ball">
        <stop offset="0" stopColor="#fb8576" />
        <stop offset=".6" stopColor="#ee7769" />
        <stop offset="1" stopColor="#a04c43" />
      </radialGradient>
    </defs>
    <Landmarks marks={marks3D} kx={1.8233} ox={-10} oy={196} r={5.300} dx={-2} dy={-4.200} fill="url(#ball)" />
  </svg>
);

const ViewSlice = () => (
  <svg width="600" height="800">
    <Landmarks marks={marksSlice} kx={2.529} ox={-10} oy={-58} r={6} dx={4} dy={-10.500} fill="#fa8072" />
    <g stroke="#fff" strokeWidth="1.200">
      <path d="M210.500 776v11.500H391V776M301 776v11" fill="none" />
      {[1, 2, 3, 4, 6, 7, 8, 9].map((i) => (
        <path key={i} d={`M${210.5 + i * 18.05} 782v5`} />
      ))}
    </g>
    <RulerText x="403" y="782" textLength="98">
      100 um
    </RulerText>
  </svg>
);

const ChartText = styled.text<{ size: number }>`
  font-family: ${(p) => (p.size > 13 ? "Lato" : '"Open Sans"')}, sans-serif;
  font-weight: ${(p) => (p.size > 13 ? 300 : 400)};
  font-size: ${(p) => p.size}px;
  letter-spacing: 0;
  fill: #000;
  stroke: #000;
  stroke-width: ${(p) => (p.size > 13 ? 0.4 : 0)}px;
`;

const steps: [number, number][] = [
  [355, 1110], [387, 1107], [537, 1104], [720, 1101], [975, 1099], [1118, 1096], [1197, 1092], [1228, 1089],
  [1260, 1086], [1269, 1083], [1275, 1074], [1284, 1068], [1299, 1053], [1308, 1047], [1317, 1044],
];
const barsPath = (() => {
  const X = (v: number) => v / 3 - 12;
  const Y = (v: number) => v / 3 + 362;
  let d = `M${X(355)} 757.5`;
  steps.forEach(([x, y]) => {
    d += `H${X(x)}V${Y(y)}`;
  });
  return d + `H429V48H432V47H435V45H437V43H440V757.5z`;
})();

const Chart = () => {
  const rows = Array.from({ length: 25 }, (_, i) => i);
  const cols = Array.from({ length: 9 }, (_, i) => i);
  const yy = (i: number) => 757.5 - i * 30.55;
  const xx = (i: number) => 54.5 + i * 53;
  return (
    <svg width="498" height="800">
      <rect width="498" height="800" fill="#fff" />
      <rect x="55" width="443" height="757.500" fill="#fffdf6" />
      {rows.slice(1, 24).map((i) => (
        <path key={i} d={`M55 ${Math.round(yy(i)) + 0.5}H478`} stroke="#f1f1f1" />
      ))}
      {cols.slice(1, 8).map((i) => (
        <path key={i} d={`M${Math.round(xx(i)) - 0.5} 25V757`} stroke="#f1f1f1" />
      ))}
      <path d="M54.500 24.500V757.500H478.500" fill="none" stroke="#000" />
      {rows.map((i) => (
        <g key={i}>
          <path d={`M49 ${Math.round(yy(i)) - 0.5}h5`} stroke="#000" />
          <ChartText size={12.5} x="48.500" y={yy(i) + 3.5} textAnchor="end">
            {String(Math.round(i * 5) / 100)}
          </ChartText>
        </g>
      ))}
      {cols.map((i) => (
        <g key={i}>
          <path d={`M${Math.round(xx(i)) - 0.5} 758v4`} stroke="#000" />
          <ChartText size={12.5} x={xx(i)} y={772} textAnchor="middle">
            {i * 20 - 20}
          </ChartText>
        </g>
      ))}
      <path d={barsPath} fill="#000" />
      <ChartText size={20.5} x="168" y="20" textLength="197">
        Procrustes Distances
      </ChartText>
      <ChartText size={17.5} x="235.500" y="790" textLength="63">
        Subjects
      </ChartText>
      <ChartText size={17.5} transform="translate(18 422) rotate(-90)" textLength="66">
        Distance
      </ChartText>
      <rect x="335.500" y="147.500" width="170" height="22" fill="#f2f2f2" stroke="#000" />
      <ChartText size={13} x="340" y="164" textLength="152">
        4153_S: Distances = 1.1685
      </ChartText>
    </svg>
  );
};

/* ---------- table ---------- */

const TableBox = styled.div`
  flex: 1;
  min-height: 0;
  display: grid;
  grid-template-columns: 480px 28px;
  grid-template-rows: 769px 29px;
  padding: 1px 2px 2px;
  background: #2a2a2a;
`;

const Grid = styled.div`
  overflow: hidden;
  background: #1e1e1e;
`;

const Row = styled.div`
  display: grid;
  grid-template-columns: 73px 139px 1fr;
  height: 60px;
`;

const HeadRow = styled(Row)`
  height: 52px;
  border-bottom: 2px solid #272727;
  border-top: 1px solid #4c4c4c;
  background: linear-gradient(#414141, #383838);
`;

const HeadCell = styled.div<{ shift?: number }>`
  display: flex;
  align-items: center;
  justify-content: center;
  padding: 6px 0 0 ${(p) => p.shift ?? 0}px;
  border-right: 2px solid #555;
  &:first-child, &:last-child { border-right: 0; }
`;

const RowHead = styled.div`
  border-top: 1px solid #505050;
  border-bottom: 2px solid #272727;
  border-right: 3px solid #2a2a2a;
  background: linear-gradient(#414141, #393939);
  display: flex;
  align-items: center;
  padding: 6px 0 0 4px;
`;

const Cell = styled.div<{ bold?: boolean; pad: number }>`
  border-left: 1px solid #2e2e2e;
  border-bottom: 1px solid #2a2a2a;
  display: flex;
  align-items: center;
  padding-left: ${(p) => p.pad}px;
  overflow: hidden;
  font-weight: ${(p) => (p.bold ? 700 : 400)};
  letter-spacing: ${(p) => (p.bold ? -0.1 : -0.6)}px;
`;

const ScrollBarH = styled.div`
  display: flex;
  background: #373737;
  border-top: 1px solid #262626;
`;

const Corner = styled.div`
  background: #333;
`;

const data: [string, string][] = [
  ["ID", "Procrustes Distance"],
  ["4074_S", "0.0405603"],
  ["4087_S", "0.0408083"],
  ["4027_S", "0.041021"],
  ["4075_S", "0.0412152"],
  ["4025_S", "0.0418221"],
  ["4028_S", "0.042012"],
  ["4035_S", "0.0420406"],
  ["4149_S", "0.0421447"],
  ["4019_S", "0.0422525"],
  ["4047_S", "0.0426065"],
  ["4156_S", "0.0426962"],
];

const Table = () => (
  <TableBox>
    <Grid>
      <HeadRow>
        <HeadCell />
        <HeadCell shift={3}>A</HeadCell>
        <HeadCell shift={98}>B</HeadCell>
      </HeadRow>
      {data.map(([id, value], i) => (
        <Row key={id}>
          <RowHead>{i + 1}</RowHead>
          <Cell bold={i === 0} pad={6}>
            {id}
          </Cell>
          <Cell bold={i === 0} pad={8}>
            {value}
          </Cell>
        </Row>
      ))}
    </Grid>
    <ScrollBarV>
      <ScrollButton h={26}>
        <Up />
      </ScrollButton>
      <Thumb h={60} />
      <Spacer />
      <ScrollButton h={26}>
        <Down />
      </ScrollButton>
    </ScrollBarV>
    <ScrollBarH>
      <ScrollButton w={26}>
        <Left />
      </ScrollButton>
      <Thumb w={211} />
      <Spacer />
      <ScrollButton w={26}>
        <Right />
      </ScrollButton>
    </ScrollBarH>
    <Corner />
  </TableBox>
);

export default function App() {
  return (
    <>
      <Global />
      <Window>
        <TitleBar>
          <Lights>
            <Light c="#ed6a5e" />
            <Light c="#e0c04c" />
            <Light c="#72be47" />
          </Lights>
          3D Slicer 4.11.20210226
        </TitleBar>
        <MainToolbar />
        <Body>
          <ModulePanel />
          <Views>
            <TopViews>
              <View>
                <ViewBar tone="blue">
                  <Pin />
                  <ViewName tone="blue">1</ViewName>
                  <Orbit />
                </ViewBar>
                <View3D />
              </View>
              <View>
                <ViewBar tone="blue">
                  <Pin />
                  <ViewName tone="blue">2</ViewName>
                  <Orbit />
                </ViewBar>
              </View>
            </TopViews>
            <Splitter>
              <SplitGrip />
            </Splitter>
            <BottomViews>
              <View>
                <ViewBar tone="red">
                  <Pin />
                  <ViewName tone="red">R</ViewName>
                  <Slice dark="#7c2015" light="#f09a92" />
                  <SliderTrack>
                    <Knob />
                  </SliderTrack>
                  <Offset>S: 0.0028mm</Offset>
                </ViewBar>
                <ViewSlice />
              </View>
              <View>
                <ViewBar tone="cyan">
                  <Pin />
                  <ViewName tone="cyan">P</ViewName>
                  <Slice dark="#0f636a" light="#7fe6ee" />
                </ViewBar>
                <Chart />
              </View>
              <View>
                <ViewBar tone="gold">
                  <Pin />
                  <ViewName tone="gold">1</ViewName>
                </ViewBar>
                <Table />
              </View>
            </BottomViews>
          </Views>
        </Body>
      </Window>
    </>
  );
}
